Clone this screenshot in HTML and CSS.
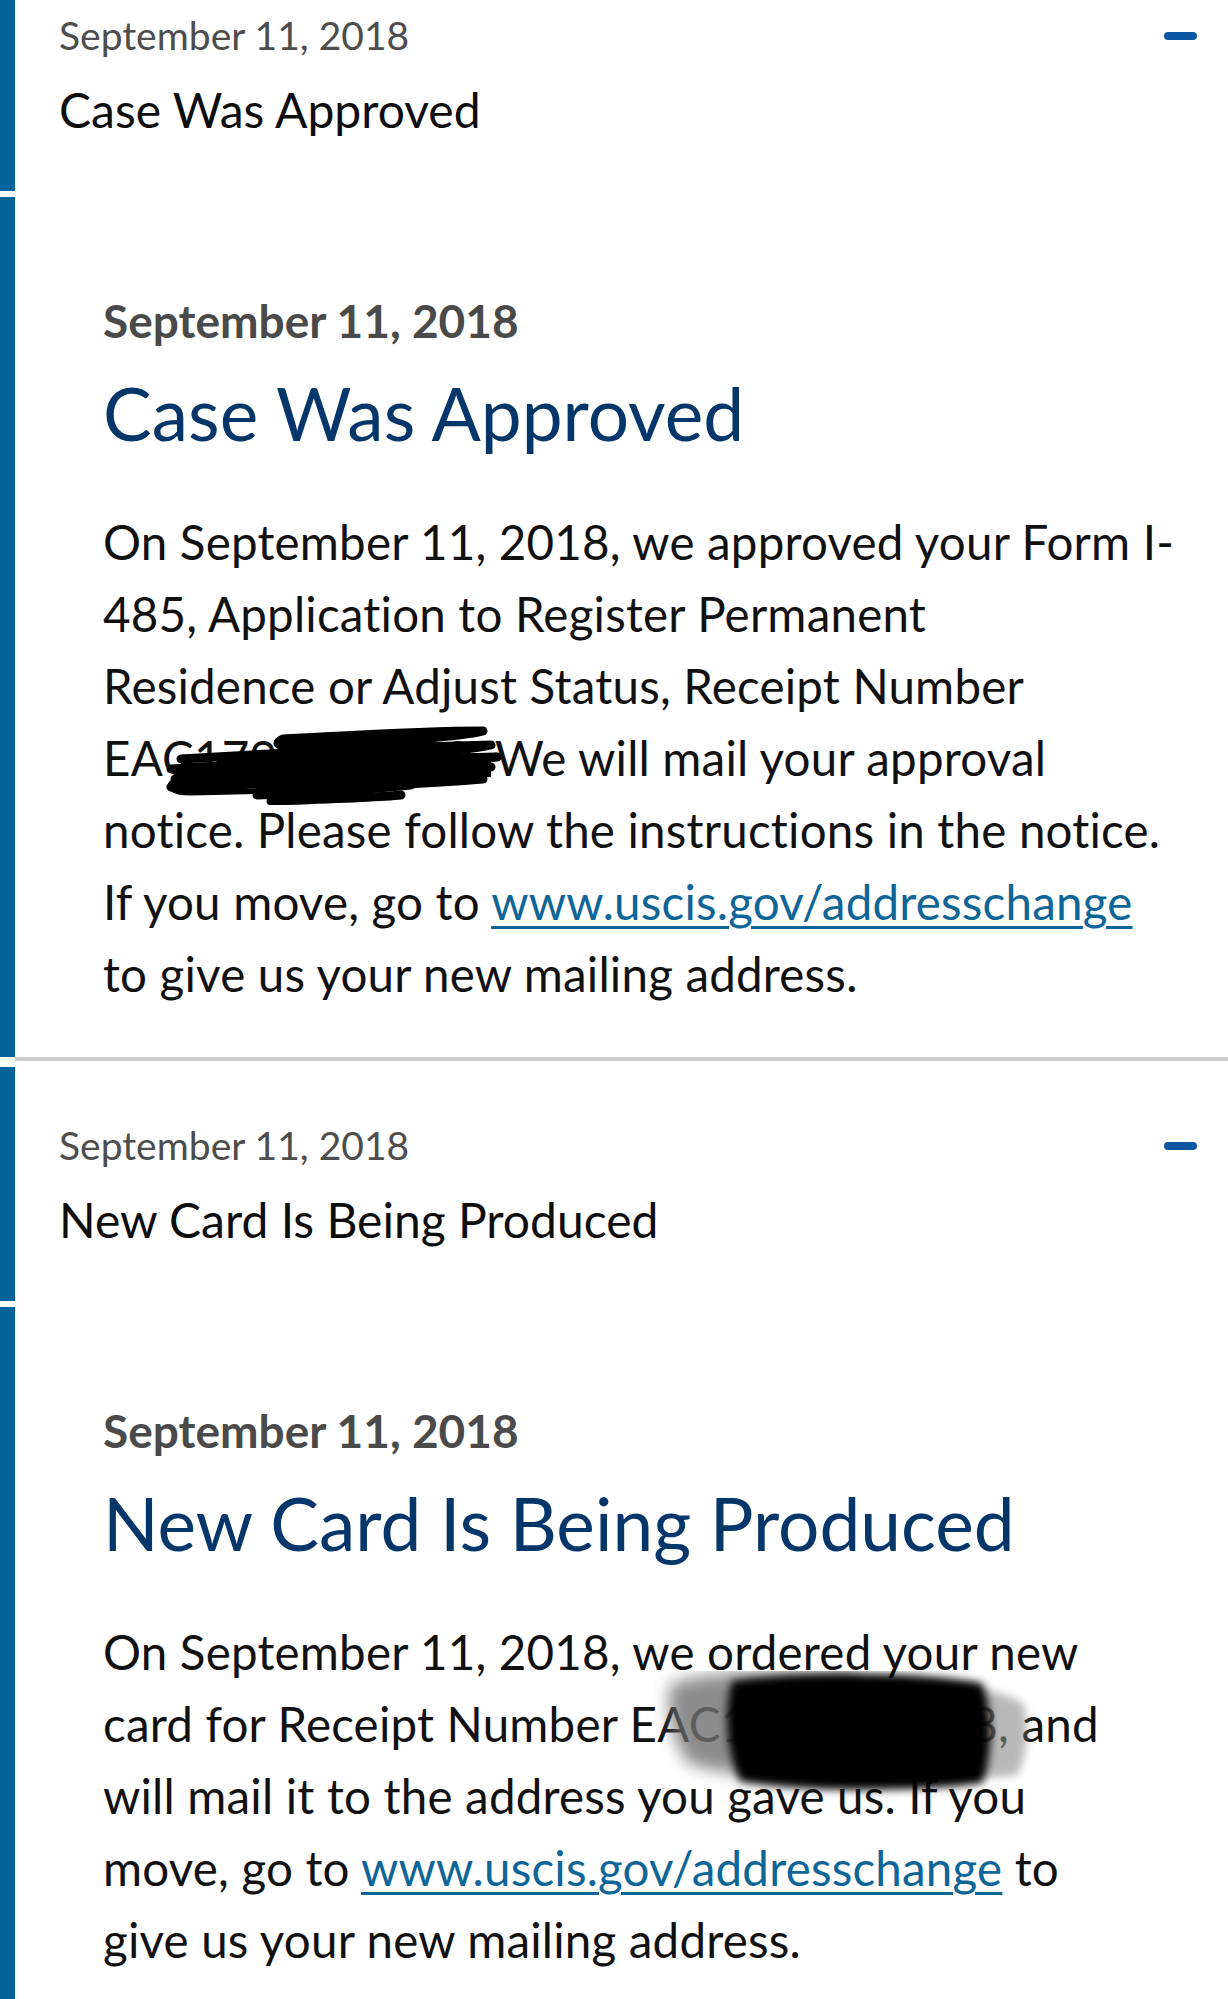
FILE: index.html
```html
<!DOCTYPE html>
<html lang="en">
<head>
<meta charset="utf-8">
<title>Case Status History</title>
<link rel="stylesheet" href="styles.css">
</head>
<body>
<div class="page">

  <section class="item">
    <div class="head">
      <div class="bar"></div>
      <div class="head-main">
        <div class="head-text">
          <div class="head-date">September 11, 2018</div>
          <div class="head-title">Case Was Approved</div>
        </div>
        <span class="toggle" aria-label="Collapse"></span>
      </div>
    </div>
    <div class="body">
      <div class="bar"></div>
      <div class="body-main">
        <div class="body-date">September 11, 2018</div>
        <h2 class="body-title">Case Was Approved</h2>
        <p class="body-text">On September 11, 2018, we approved your Form I-<br>485, Application to Register Permanent<br>Residence or Adjust Status, Receipt Number<br><span class="redact">EAC1790000000.<svg class="scribble" viewBox="0 0 340 80" width="340" height="80" aria-hidden="true"><g fill="none" stroke="#000" stroke-width="9" stroke-linecap="round" stroke-linejoin="round"><path d="M122 14 C200 10 260 6 322 6 C300 12 240 16 150 20 C120 22 110 20 122 14"/><path d="M20 34 C120 28 240 22 330 20 C300 28 200 30 60 36"/><path d="M10 44 C120 38 240 34 336 32 C250 40 140 44 18 52"/><path d="M14 54 C120 50 240 46 330 42"/><path d="M10 62 C110 58 230 56 322 54 C250 60 140 64 30 66 C10 66 8 60 14 58"/><path d="M96 70 C160 68 210 64 250 60"/><path d="M110 76 C170 74 220 72 240 70"/></g><path d="M20 38 L330 28 L330 52 L18 60 Z" fill="#000"/></svg></span> We will mail your approval<br>notice. Please follow the instructions in the notice.<br>If you move, go to <a class="link" href="#">www.uscis.gov/addresschange</a><br>to give us your new mailing address.</p>
      </div>
    </div>
    <div class="sep"></div>
  </section>

  <section class="item">
    <div class="head">
      <div class="bar"></div>
      <div class="head-main">
        <div class="head-text">
          <div class="head-date">September 11, 2018</div>
          <div class="head-title">New Card Is Being Produced</div>
        </div>
        <span class="toggle" aria-label="Collapse"></span>
      </div>
    </div>
    <div class="body">
      <div class="bar"></div>
      <div class="body-main">
        <div class="body-date">September 11, 2018</div>
        <h2 class="body-title">New Card Is Being Produced</h2>
        <p class="body-text">On September 11, 2018, we ordered your new<br>card for Receipt Number <span class="redact">EAC1790000008<svg class="blob" viewBox="0 0 420 150" width="420" height="150" aria-hidden="true"><defs><filter id="bl" x="-40%" y="-40%" width="180%" height="180%"><feGaussianBlur stdDeviation="8"/></filter><filter id="bl2" x="-30%" y="-30%" width="160%" height="160%"><feGaussianBlur stdDeviation="4"/></filter></defs><path d="M40 14 C70 0 150 -2 230 6 L236 110 C170 112 90 104 58 92 C42 70 36 40 40 14 Z" fill="#707070" opacity="0.8" filter="url(#bl)"/><path d="M300 16 C340 14 378 20 394 34 C400 62 396 92 386 104 C360 108 330 106 300 102 Z" fill="#8a8a8a" opacity="0.6" filter="url(#bl2)"/><path d="M102 10 C180 0 280 0 352 12 C364 42 362 90 352 112 C280 122 170 120 110 110 C96 80 94 38 102 10 Z" fill="#000" filter="url(#bl2)"/></svg></span>, and<br>will mail it to the address you gave us. If you<br>move, go to <a class="link" href="#">www.uscis.gov/addresschange</a> to<br>give us your new mailing address.</p>
      </div>
    </div>
  </section>

</div>
</body>
</html>
```

FILE: styles.css
```css
html, body {
  margin: 0;
  padding: 0;
  background: #ffffff;
}

body {
  font-family: "Lato", "Liberation Sans", Arial, sans-serif;
  color: #111111;
  overflow: hidden;
}

.page {
  margin-top: -43px;
}

.bar {
  width: 15px;
  flex: 0 0 15px;
  background: #03639b;
}

.head {
  display: flex;
  height: 234px;
}

.head-main {
  flex: 1;
  display: flex;
  justify-content: space-between;
  align-items: flex-start;
  padding: 54px 31px 0 44px;
}

.head-date {
  font-size: 39px;
  line-height: 48px;
  color: #4d4d4d;
}

.head-title {
  margin-top: 23px;
  font-size: 48px;
  line-height: 56px;
  color: #0d0d0d;
}

.toggle {
  display: block;
  width: 33px;
  height: 8px;
  margin-top: 21px;
  border-radius: 4px;
  background: #0a56a0;
}

.body {
  display: flex;
  margin-top: 6px;
}

.body-main {
  flex: 1;
  padding: 98px 60px 47px 88px;
}

.body-date {
  font-size: 46px;
  line-height: 52px;
  font-weight: 700;
  color: #4a4a4a;
}

.body-title {
  margin: 24px 0 0;
  font-size: 73px;
  line-height: 84px;
  font-weight: 400;
  color: #04366a;
}

.body-text {
  margin: 51px 0 0;
  font-size: 47.5px;
  line-height: 72px;
  letter-spacing: 0.2px;
  white-space: nowrap;
  color: #111111;
}

.link {
  color: #0e6597;
  text-decoration: underline;
  text-decoration-thickness: 3px;
  text-underline-offset: 6px;
}

.redact {
  position: relative;
}

.scribble {
  position: absolute;
  left: 58px;
  top: -4px;
}

.blob {
  position: absolute;
  left: 0;
  top: -24px;
}

.sep {
  height: 4px;
  margin: 0 0 6px 15px;
  background: #cccccc;
}
```
